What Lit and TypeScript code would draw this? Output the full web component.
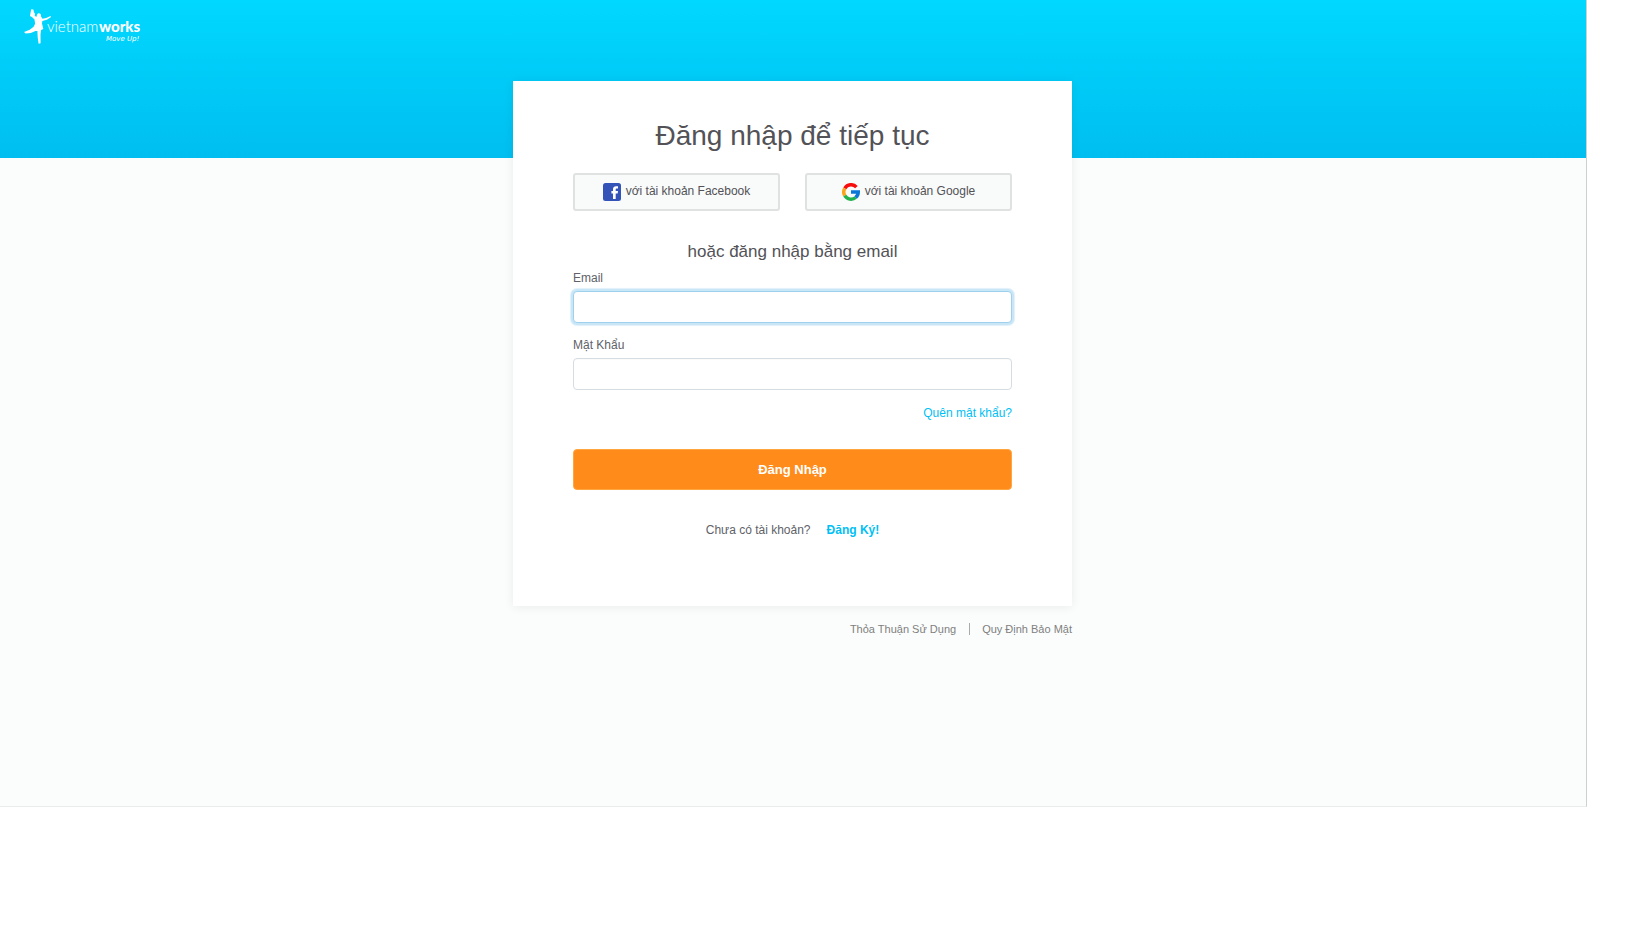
import { LitElement, html, css } from "lit";
import { customElement } from "lit/decorators.js";

@customElement("app-root")
export class AppRoot extends LitElement {
  static styles = css`
    :host {
      display: block;
      min-height: 100vh;
      box-sizing: border-box;
      padding: 0 63px 121px 0;
      background: #fff;
      color: #525257;
      font-family: "Liberation Sans", Arial, sans-serif;
      font-size: 12px;
      line-height: 16px;
    }
    * {
      box-sizing: border-box;
    }
    a {
      color: #00c0f5;
      text-decoration: none;
    }
    .page {
      display: flex;
      flex-direction: column;
      min-height: calc(100vh - 121px);
      padding-right: 1px;
      border-right: 1px solid #cdd2cd;
      border-bottom: 1px solid #e8ecea;
      background: linear-gradient(#00d8ff, #00bef0) 0 0 / 100% 158px no-repeat #fbfdfc;
    }
    .top {
      height: 81px;
      padding: 8px 24px;
    }
    .logo {
      display: block;
      width: 124px;
      height: 37px;
    }
    .logo svg {
      display: block;
    }
    .column {
      width: 100%;
      max-width: 559px;
      margin: 0 auto;
    }
    .card {
      padding: 37px 60px 68px;
      background: #fff;
      box-shadow: 0 1px 10px rgba(0, 0, 0, 0.07);
    }
    h1,
    h2 {
      margin: 0;
      font-weight: 400;
      text-align: center;
    }
    h1 {
      font-size: 28px;
      line-height: 36px;
    }
    h2 {
      margin-top: 30px;
      font-size: 17px;
      line-height: 22px;
    }
    .social {
      display: grid;
      grid-template-columns: 1fr 1fr;
      gap: 25px;
      margin-top: 19px;
    }
    .social button {
      display: flex;
      align-items: center;
      justify-content: center;
      gap: 5px;
      height: 38px;
      padding: 0;
      border: 2px solid #e0e1e1;
      border-radius: 3px;
      background: #f9fafa;
      color: inherit;
      font: inherit;
    }
    .social span {
      padding-bottom: 2px;
    }
    label {
      display: block;
      margin-top: 7px;
      color: #606267;
      line-height: 16px;
    }
    input {
      display: block;
      width: 100%;
      height: 32px;
      margin-top: 5px;
      padding: 6px 12px;
      border: 1px solid #d6dde2;
      border-radius: 4px;
      background: #fff;
      box-shadow: inset 0 1px 1px rgba(0, 0, 0, 0.02);
      font: inherit;
      outline: none;
    }
    input:focus {
      border-color: #9fd0ee;
      box-shadow: 0 0 0 2px #c9e6f6, 0 0 1px 3px #e0f1fa;
    }
    .second {
      margin-top: 14px;
    }
    .forgot {
      margin-top: 15px;
      text-align: right;
    }
    .submit {
      display: block;
      width: 100%;
      height: 41px;
      margin-top: 28px;
      padding: 0;
      border: 1px solid #ffa640;
      border-radius: 4px;
      background: #ff8c1a;
      color: #fff;
      font: inherit;
      font-size: 13px;
      font-weight: 700;
    }
    .join {
      display: flex;
      justify-content: center;
      gap: 16px;
      margin-top: 32px;
      color: #606267;
    }
    .join a {
      font-weight: 700;
    }
    footer {
      display: flex;
      justify-content: flex-end;
      align-items: center;
      margin-top: 15px;
      font-size: 11px;
    }
    footer a {
      color: #808080;
    }
    footer a + a {
      margin-left: 13px;
      padding-left: 13px;
      background: linear-gradient(#aaa, #aaa) 0 2px / 1px 12px no-repeat;
    }
  `;

  protected firstUpdated() {
    this.renderRoot.querySelector<HTMLInputElement>("#email")?.focus();
  }

  render() {
    return html`
      <div class="page">
        <header class="top">
          <a class="logo" href="#" aria-label="VietnamWorks">
            <svg width="124" height="37" viewBox="24 8 124 37" fill="#fff">
              <path d="M31.2 9.2l2.2.3.5 2.6 1.2 2-.4 1.9 2 .8c-.1-1.9.7-3.3 2.1-3.5 1.6-.1 2.6 1.2 2.2 3.2l1.5 2.2 3.7-.7 4.3-2 .6 1-4.2 2.8-4.6 1.3-.3 2.4 1.3 5.5-2.2.9-.6 4.6.1 8.8-2 .5-.9-6.6-.3-6.1-2-.1-4.6 2.1-5.2.4-1.6-1.4 1.3-.6 4.4-1.8 3.9-2.9 1.5-3-.6-4.2-2.6-2.7-2-.8z" />
              <text y="32" font-family="Lato, sans-serif"><tspan x="47" font-size="15" font-weight="300">vietnam</tspan><tspan x="99" font-size="15" font-weight="900">works</tspan></text>
              <text x="106" y="41" font-size="7" font-style="oblique" font-family="DejaVu Sans, sans-serif">Move Up!</text>
            </svg>
          </a>
        </header>
        <main class="column">
          <form class="card" @submit=${(e: Event) => e.preventDefault()}>
            <h1>Đăng nhập để tiếp tục</h1>
            <div class="social">
              <button type="button">
                <svg width="18" height="18" viewBox="0 0 18 18" aria-hidden="true">
                  <rect width="18" height="18" rx="2.5" fill="#3453b9" />
                  <path d="M10 16V10.5H8.4V8H10V6.3C10 4.2 11.2 3.3 13 3.3h2v2.3h-1.2c-.8 0-1.1.3-1.1 1V8H15l-.3 2.5h-2V16z" fill="#fff" />
                </svg>
                <span>với tài khoản Facebook</span>
              </button>
              <button type="button">
                <svg width="18" height="18" viewBox="0 0 18 18" fill="none" stroke-width="3.5" aria-hidden="true">
                  <path d="M2.8 5.3A7.25 7.25 0 0 1 14.4 4.1" stroke="#f90c0c" />
                  <path d="M2.8 12.7a7.25 7.25 0 0 1 0-7.4" stroke="#fba31a" />
                  <path d="M13.7 14.5A7.25 7.25 0 0 1 2.8 12.7" stroke="#22b14c" />
                  <path d="M9 9h7.25c0 2.3-1 4.2-2.6 5.5" stroke="#0b78d8" />
                </svg>
                <span>với tài khoản Google</span>
              </button>
            </div>
            <h2>hoặc đăng nhập bằng email</h2>
            <label for="email">Email</label>
            <input id="email" type="text" autocomplete="off" />
            <label class="second" for="password">Mật Khẩu</label>
            <input id="password" type="password" autocomplete="off" />
            <div class="forgot"><a href="#">Quên mật khẩu?</a></div>
            <button class="submit" type="submit">Đăng Nhập</button>
            <div class="join"><span>Chưa có tài khoản?</span><a href="#">Đăng Ký!</a></div>
          </form>
          <footer>
            <a href="#">Thỏa Thuận Sử Dụng</a>
            <a href="#">Quy Định Bảo Mật</a>
          </footer>
        </main>
      </div>
    `;
  }
}
